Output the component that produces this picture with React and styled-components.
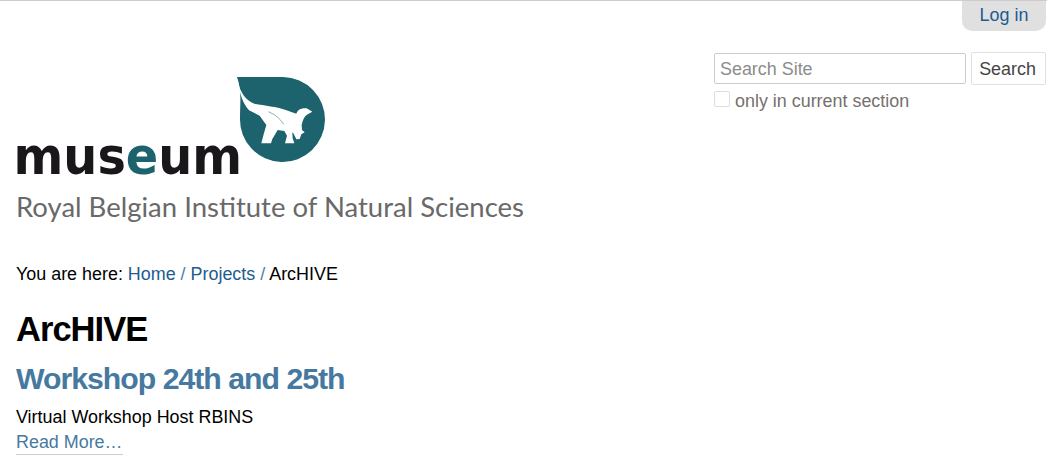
import React from 'react';
import styled, { createGlobalStyle } from 'styled-components';

const GlobalStyle = createGlobalStyle`
  html, body {
    margin: 0;
    padding: 0;
    background: #fff;
    color: #000;
    font-family: "Liberation Sans", Arial, sans-serif;
    font-size: 17.92px;
  }
`;

const Logo = () => (
  <LogoSvg width="513" height="147" viewBox="-3 0 513 147">
    <path d="M221 0 L267 0 A42.5 42.5 0 1 1 224 41 C224 26 226 14 221 0 Z" fill="#1d636d" />
    <g transform="translate(219 -2) scale(0.3333)">
      <path
        d="M9 22 C14 48 32 78 58 86 C90 92 125 95 150 104 L184 116 C188 106 195 99 215 100 L232 110 L216 119 C208 124 203 135 200 150 L201 165 L209 172 L199 178 L194 192 L184 193 L176 176 L172 172 L173 190 L178 205 L150 205 L156 182 L148 168 L128 165 L112 192 L108 205 L79 205 L86 178 L94 150 L74 122 L42 106 C25 88 14 58 9 22 Z"
        fill="#fff"
      />
      <path d="M100 110 C120 118 135 130 146 148" fill="none" stroke="#1d636d" strokeWidth="1.5" />
    </g>
    <LogoWord transform="translate(-2.5 97) scale(0.92 1)">
      mus<LogoAccent>e</LogoAccent>um
    </LogoWord>
    <LogoTagline x="0" y="140" textLength="508" lengthAdjust="spacingAndGlyphs">
      Royal Belgian Institute of Natural Sciences
    </LogoTagline>
  </LogoSvg>
);

const App = () => (
  <>
    <GlobalStyle />
    <Page>
      <TopBar>
        <LoginTab href="#">Log in</LoginTab>
      </TopBar>
      <Header>
        <Logo />
        <SearchBox>
          <SearchRow>
            <SearchInput placeholder="Search Site" />
            <SearchButton>Search</SearchButton>
          </SearchRow>
          <SectionLabel>
            <FakeCheck />
            only in current section
          </SectionLabel>
        </SearchBox>
      </Header>
      <Main>
        <Breadcrumbs>
          You are here: <a href="#">Home</a> <Sep>/</Sep> <a href="#">Projects</a> <Sep>/</Sep> ArcHIVE
        </Breadcrumbs>
        <Title>ArcHIVE</Title>
        <ItemTitle>Workshop 24th and 25th</ItemTitle>
        <Description>Virtual Workshop Host RBINS</Description>
        <ReadMore href="#">Read More…</ReadMore>
      </Main>
    </Page>
  </>
);

const Page = styled.div`
  border-top: 1px solid #ccc;
  height: 459px;
  overflow: hidden;
`;

const TopBar = styled.div`
  display: flex;
  justify-content: flex-end;
  padding-right: 1px;
`;

const LoginTab = styled.a`
  display: block;
  width: 84px;
  height: 30px;
  line-height: 29px;
  text-align: center;
  background: #e0e0e0;
  border-radius: 0 0 10px 10px;
  color: #205c90;
  text-decoration: none;
`;

const Header = styled.div`
  display: flex;
  justify-content: space-between;
  align-items: flex-start;
  padding: 21px 1px 0 13px;
`;

const LogoSvg = styled.svg`
  display: block;
  margin-top: 25px;
`;

const LogoWord = styled.text`
  font-family: "DejaVu Sans", sans-serif;
  font-weight: 700;
  font-size: 52px;
  fill: #1a171b;
`;

const LogoAccent = styled.tspan`
  fill: #1d636d;
`;

const LogoTagline = styled.text`
  font-family: "Lato", sans-serif;
  font-size: 27px;
  fill: #696969;
`;

const SearchBox = styled.div`
  display: flex;
  flex-direction: column;
  width: 332px;
`;

const SearchRow = styled.div`
  display: flex;
  align-items: center;
  justify-content: space-between;
`;

const SearchInput = styled.input`
  box-sizing: border-box;
  width: 252px;
  height: 31px;
  padding: 1px 5px 0;
  border: 1px solid #ccc;
  border-radius: 2px;
  font: 17.92px "Liberation Sans", Arial, sans-serif;

  &::placeholder {
    color: #8c8c8c;
    opacity: 1;
  }
`;

const SearchButton = styled.button`
  box-sizing: border-box;
  width: 75px;
  height: 33px;
  padding: 1px 2px 0 0;
  background: #fff;
  border: 1px solid #e0e0e0;
  border-radius: 2px;
  color: #444;
  font: 17.92px "Liberation Sans", Arial, sans-serif;
`;

const SectionLabel = styled.label`
  display: flex;
  align-items: center;
  gap: 5px;
  margin-top: 5px;
  color: #76706e;
  line-height: 22px;
`;

const FakeCheck = styled.span`
  box-sizing: border-box;
  width: 16px;
  height: 16px;
  border: 1px solid #ddd;
  border-radius: 2px;
  position: relative;
  top: -2px;
`;

const Main = styled.main`
  padding: 37px 16px 0;
`;

const Breadcrumbs = styled.div`
  line-height: 26px;

  a {
    color: #205c90;
    text-decoration: none;
  }
`;

const Sep = styled.span`
  color: #4d7ea8;
`;

const Title = styled.h1`
  margin: 22px 0 0;
  font-size: 34.56px;
  line-height: 40px;
  letter-spacing: -1px;
`;

const ItemTitle = styled.h2`
  margin: 12px 0 0;
  color: #46799f;
  font-size: 30.24px;
  line-height: 36px;
  letter-spacing: -1px;
`;

const Description = styled.p`
  margin: 7px 0 0;
  line-height: 26px;
`;

const ReadMore = styled.a`
  display: inline-block;
  margin-top: 1px;
  color: #46799f;
  line-height: 23px;
  text-decoration: none;
  border-bottom: 1px solid #ccc;
`;

export default App;
